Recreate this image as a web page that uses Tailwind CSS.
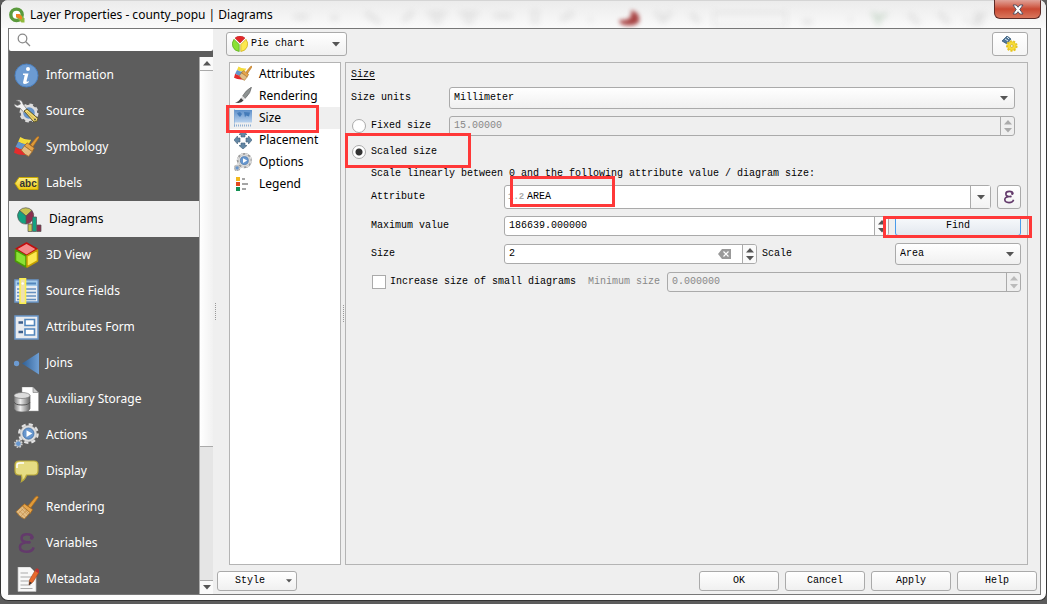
<!DOCTYPE html>
<html lang="en">
<head>
  <meta charset="UTF-8" />
  <meta name="viewport" content="width=device-width, initial-scale=1.0"/>
  <title>Layer Properties - county_popu | Diagrams</title>
  <script src="https://cdn.jsdelivr.net/npm/@tailwindcss/browser@4"></script>
</head>
<body class="h-screen overflow-hidden bg-[#5c5c5c] font-['Liberation_Mono',monospace] text-[10px] leading-3 text-black">

  <!-- Shared icons -->
  <svg class="absolute h-0 w-0" aria-hidden="true">
    <defs>
      <linearGradient id="silver"><stop offset="0" stop-color="#777"/><stop offset=".4" stop-color="#eee"/><stop offset="1" stop-color="#666"/></linearGradient>
      <linearGradient id="join"><stop offset="0" stop-color="#2f5f95"/><stop offset="1" stop-color="#6f9fd4"/></linearGradient>
      <linearGradient id="yellow" x2="0" y2="1"><stop offset="0" stop-color="#fdf08a"/><stop offset="1" stop-color="#ecc911"/></linearGradient>
      <linearGradient id="blue" x2="0" y2="1"><stop offset="0" stop-color="#5d8fca"/><stop offset="1" stop-color="#b9d2ee"/></linearGradient>
    </defs>
    <symbol id="brush" viewBox="0 0 24 24">
      <path d="M13 11 20.500 2 Q22.500 0 23 1.500 Q24 2 22.500 3.500L16 12.500z" fill="#e09a38" stroke="#a8671a" stroke-width=".7"/>
      <path d="M10 8.500 18 14 15.500 18 7.500 11z" fill="#e7a54a" stroke="#9c611b" stroke-width=".8"/>
      <path d="M8 10.500 15.500 17 10 23 Q5 21 2 16z" fill="#e2bd85" stroke="#a8742f" stroke-width=".9"/>
      <path d="M5 15l6 6M7 13l6 6M9 12l5 6M4 18l5-5M7 20l6-6" stroke="#c48f4b" stroke-width=".7"/>
    </symbol>
    <symbol id="symbology" viewBox="0 0 24 24">
      <path d="M6 2 Q10 5 16.500 4.500 L14 9 Q8 9 4 6.500z" fill="#f4dc3c"/>
      <path d="M4 6.500 Q8 9 14 9 L10 14 Q5 14 1.500 11.500z" fill="#6394cc"/>
      <path d="M1.500 11.500 Q5 14 10 14 L14 19 Q5 20 0 17z" fill="#e42c2c"/>
      <path d="M16 9 22 2 Q24 .5 24 2.500L18 11.500z" fill="#e09a38" stroke="#a8671a" stroke-width=".6"/>
      <path d="M12.500 7.500 19.500 12.500 17.500 16 10 10.500z" fill="#e7a54a" stroke="#9c611b" stroke-width=".7"/>
      <path d="M10 10.500 17.500 16 14 20.500 Q10 19 7 14.500z" fill="#e2bd85" stroke="#a8742f" stroke-width=".8"/>
    </symbol>
    <symbol id="gears" viewBox="0 0 26 26">
      <circle cx="15" cy="11" r="9.300" fill="none" stroke="#e2e2e2" stroke-width="3" stroke-dasharray="4.200 3.100"/>
      <circle cx="15" cy="11" r="8.500" fill="#dedede" stroke="#b5b5b5" stroke-width=".6"/>
      <circle cx="15" cy="11" r="5.800" fill="#6797cf" stroke="#3a699f" stroke-width=".8"/>
      <path d="M13 7.500v7l6-3.500z" fill="#fff"/>
      <circle cx="4.500" cy="21.500" r="3.700" fill="none" stroke="#d8d8d8" stroke-width="1.600" stroke-dasharray="1.700 1.200"/>
      <circle cx="4.500" cy="21.500" r="2.900" fill="#6797cf" stroke="#ccc" stroke-width=".9"/>
    </symbol>
    <symbol id="down" viewBox="0 0 8 5"><path d="M0 0h8L4 4.500z" fill="currentColor"/></symbol>
    <symbol id="up" viewBox="0 0 8 5"><path d="M0 4.500h8L4 0z" fill="currentColor"/></symbol>
    <symbol id="epsilon" viewBox="0 0 16 20">
      <path d="M13.500 5.500 Q13.500 2 8.500 2 Q3.500 2 3.500 5.600 Q3.500 9.200 10 9.300 Q2 9.500 2 13.700 Q2 18 8 18 Q13.500 18 14.500 14" fill="none" stroke="#633a6b" stroke-width="2.300"/>
      <circle cx="12.700" cy="5.300" r="1.700" fill="#633a6b"/><circle cx="10.500" cy="9.300" r="1.400" fill="#633a6b"/>
    </symbol>
  </svg>

  <div class="relative flex h-[calc(100vh-3px)] flex-col overflow-hidden rounded-lg border-x border-b border-[#333] bg-[#fdfdfd] pr-[5px] pb-[5px] pl-[7px]">

    <!-- Title bar -->
    <header class="relative -mr-[5px] -ml-[7px] flex h-7 shrink-0 items-center border-t border-[#d5d5d5] bg-linear-to-b from-[#ececec] to-[#fafafa] pl-2">
      <svg class="absolute top-0 left-0 h-full w-full" aria-hidden="true">
        <g class="blur-[3px]" fill="none" stroke="#999" stroke-opacity=".25" stroke-width="4">
          <path d="M293 16h14M330 17h7M365 12l14 10M402 20l10-9M427 13h18M431 20h10M459 13h18M463 20h10M493 15h18M530 12h8M530 20h8M560 19l12-7M588 19h3M655 11l7 9 8-9M690 13l8 8M802 21h9M848 19h3M908 13l10 10M938 12l10 10M973 14h9l-9 8h9M964 19h3"/>
          <path d="M713 12h72v13h-72z" stroke-opacity=".12"/>
          <path d="M871 12l6 5 9-4M877 17v7" stroke="#5c8f60" stroke-opacity=".35" stroke-width="3"/>
        </g>
        <path class="blur-[2px]" d="M630 9 Q640 12 638 21 Q632 27 620 23 Q616 18 621 19 Q632 20 630 9z" fill="#a84444"/>
      </svg>
      <svg class="relative h-4 w-4" viewBox="0 0 16 16">
        <circle cx="7.500" cy="7.800" r="5.700" fill="#fff" stroke="#5a9a3c" stroke-width="3.400"/>
        <path d="M7.500 7.500h4l4 4v4h-3l-5-5z" fill="#8fb93c"/>
        <path d="M7 7h3.500l2.500 2.500v3.300L7 10z" fill="#ef8322"/>
      </svg>
      <h1 class="relative ml-[5px] font-['Noto_Sans',sans-serif] text-[12px] leading-4">Layer Properties - county_popu | Diagrams</h1>
      <button aria-label="Close" class="absolute -top-px right-[5px] flex h-[19px] w-[47px] items-center justify-center rounded-b-md border border-t-0 border-[#5c2a26] bg-linear-to-b from-[#e0a298] via-[#c94832] via-50% to-[#d9765c]">
        <svg class="h-[11px] w-3" viewBox="0 0 12 11"><path d="M1 1h3.200L6 3.300 7.800 1H11L7.800 5.500 11 10H7.800L6 7.700 4.200 10H1L4.200 5.500z" fill="#fff" stroke="#4a4c60" stroke-width=".9"/></svg>
      </button>
    </header>

    <div class="flex min-h-0 flex-1 border border-[#777] bg-[#efefef]">

      <!-- Section list -->
      <aside class="flex w-[204px] shrink-0 flex-col bg-[#5d5d5d] font-['Noto_Sans',sans-serif] text-[12px] leading-5 text-white">
        <label class="flex h-[22px] shrink-0 items-center rounded-b-xs bg-white pl-2">
          <svg class="h-3.5 w-3.5" viewBox="0 0 14 14" fill="none" stroke="#8a8a8a" stroke-width="1.300"><circle cx="5.500" cy="5.500" r="4.300"/><path d="M8.800 8.800 13 13"/></svg>
          <input type="search" aria-label="Search" class="min-w-0 flex-1 px-1 text-black outline-none">
        </label>
        <div class="mt-1.5 flex min-h-0 flex-1">
          <nav class="min-w-0 flex-1 overflow-hidden">
            <a href="#" class="flex h-9 items-center gap-[7px] pl-[5px]">
              <svg class="h-[25px] w-[25px] shrink-0" viewBox="0 0 25 25"><circle cx="12.500" cy="12.500" r="11.500" fill="#6c9bd2" stroke="#4b7fbd"/><circle cx="14" cy="6" r="2" fill="#fff"/><path d="M9 10.500h5.500l-2 7.500q0 1.500 2.500 0l-.5 1.500q-5 3-5.500 0l1.700-7.500H9z" fill="#fff"/></svg>
              Information
            </a>
            <a href="#" class="flex h-9 items-center gap-[7px] pl-[5px]">
              <svg class="h-[25px] w-[25px] shrink-0" viewBox="0 0 25 25">
                <circle cx="15" cy="14" r="7" fill="#6493ca" stroke="#ddd" stroke-width="2.500"/>
                <circle cx="15" cy="14" r="8.500" fill="none" stroke="#ddd" stroke-width="2" stroke-dasharray="3.700 3"/>
                <path d="M2 1.500 Q8-.5 9 5 L13.500 11 10.500 14 6 9 Q1 9.500 0 5 L3.500 6.500 6.500 5 5.500 2.500z" fill="#f3f3f3" stroke="#777" stroke-width=".7"/>
                <path d="M10 12 13 10 24 19.500 Q24 23 20 23z" fill="#efd86f" stroke="#5d5528" stroke-width="1"/><path d="M13 13l7.500 7" stroke="#cdb04d"/><circle cx="21" cy="20.500" r=".9" fill="#444"/>
              </svg>
              Source
            </a>
            <a href="#" class="flex h-9 items-center gap-[7px] pl-[5px]">
              <svg class="h-[25px] w-[25px] shrink-0"><use href="#symbology"/></svg>
              Symbology
            </a>
            <a href="#" class="flex h-9 items-center gap-[7px] pl-[5px]">
              <svg class="h-[25px] w-[25px] shrink-0" viewBox="0 0 25 25"><path d="M1 12.500 5 6.500h19v12H5z" fill="url(#yellow)" stroke="#c7a800"/><text x="5.500" y="16" font-family="Liberation Sans" font-weight="bold" font-size="10" fill="#333">abc</text></svg>
              Labels
            </a>
            <a href="#" aria-current="page" class="flex h-9 items-center gap-[7px] bg-[#efefef] pl-2 text-black">
              <svg class="h-[25px] w-[25px] shrink-0" viewBox="0 0 25 25">
                <g stroke="#555" stroke-width=".7"><path d="M9 9 2.500 3.500A8.500 8.500 0 0 1 15 3.500z" fill="#c8c452"/><path d="M9 9 15 3.500A8.500 8.500 0 0 1 9 17z" fill="#8c2f4e"/><path d="M9 9v8A8.200 8.200 0 0 1 2.500 3.500z" fill="#14a181"/>
                <path d="M11 17h4v7.500h-4z" fill="#c8c452"/><path d="M15.500 10h4v14.500h-4z" fill="#14a181"/><path d="M20 18h4v6.500h-4z" fill="#8c2f4e"/></g>
              </svg>
              Diagrams
            </a>
            <a href="#" class="flex h-9 items-center gap-[7px] pl-[5px]">
              <svg class="h-[26px] w-[25px] shrink-0" viewBox="0 0 25 26" stroke-width="1.500" stroke-linejoin="round"><path d="M12.500 1 23 7 12.500 13.500 2 7z" fill="#f48b8b" stroke="#c00e0e"/><path d="M1.500 8 12 14v11L1.500 19z" fill="#8ae234" stroke="#4a9a06"/><path d="M23.500 8 13 14v11l10.500-6z" fill="#fce94f" stroke="#c4a000"/></svg>
              3D View
            </a>
            <a href="#" class="flex h-9 items-center gap-[7px] pl-[5px]">
              <svg class="h-[26px] w-[25px] shrink-0" viewBox="0 0 25 26"><path d="M1 2h23v22H1z" fill="#e9edf2" stroke="#6a97c9" stroke-width="1.500"/><path d="M2 3h21v5H2z" fill="#a5cdec"/><path d="M3 5.500h19" stroke="#5387bd" stroke-width="2"/><path d="M3 11h19M3 14.500h19M3 18h19M3 21.500h19" stroke="#6690c0" stroke-width="1.300"/><path d="M6 .8h5.500v24.500H6z" fill="#eee0b0" stroke="#fbef4d" stroke-width="1.600"/><circle cx="8.700" cy="5.500" r="1.200" fill="#fff"/></svg>
              Source Fields
            </a>
            <a href="#" class="flex h-9 items-center gap-[7px] pl-[5px]">
              <svg class="h-[25px] w-[25px] shrink-0" viewBox="0 0 25 25"><path d="M1 1h23v23H1z" fill="#e8ebef" stroke="#6a97c9" stroke-width="1.500"/><path d="M11 4.500h9.500v6H11zM11 14h9.500v6H11z" fill="#fff" stroke="#5387bd" stroke-width="1.600"/><path d="M4.500 7.500H9M4.500 17H9" stroke="#3c5f8c" stroke-width="2.400"/></svg>
              Attributes Form
            </a>
            <a href="#" class="flex h-9 items-center gap-[7px] pl-[5px]">
              <svg class="h-[25px] w-[25px] shrink-0" viewBox="0 0 25 25"><circle cx="2.500" cy="12.500" r="2.700" fill="#6c9bd2"/><path d="M8 12.500 25 1.500v22z" fill="url(#join)"/></svg>
              Joins
            </a>
            <a href="#" class="flex h-9 items-center gap-[7px] pl-[5px]">
              <svg class="h-[25px] w-[25px] shrink-0" viewBox="0 0 25 25"><path d="M8 0h11l5.500 5.500V24H8z" fill="#fff" stroke="#999" stroke-width=".5"/><path d="M19 0v5.500h5.500z" fill="#ccc" stroke="#777" stroke-width=".6"/><path d="M0 8.500v13Q1 25 8 25T16 21.500v-13z" fill="url(#silver)" stroke="#666" stroke-width=".7"/><ellipse cx="8" cy="8.500" rx="8" ry="3" fill="#ddd" stroke="#777" stroke-width=".7"/><path d="M0 15q1 3 8 3t8-3" fill="none" stroke="#555"/></svg>
              Auxiliary Storage
            </a>
            <a href="#" class="flex h-9 items-center gap-[7px] pl-[5px]">
              <svg class="h-[25px] w-[25px] shrink-0"><use href="#gears"/></svg>
              Actions
            </a>
            <a href="#" class="flex h-9 items-center gap-[7px] pl-[5px]">
              <svg class="h-[25px] w-[25px] shrink-0" viewBox="0 0 25 25"><path d="M5 2h15q4 0 4 4v6q0 4-4 4h-7.500q-1 4-5 6.500 1-3 0-6.500H5q-4 0-4-4V6q0-4 4-4z" fill="#e6dc83" stroke="#b9a93a" stroke-width="1.200"/><path d="M3 9V6q0-2 3-2h4" stroke="#fff" fill="none" stroke-width="1.500"/></svg>
              Display
            </a>
            <a href="#" class="flex h-9 items-center gap-[7px] pl-[5px]">
              <svg class="h-[25px] w-[25px] shrink-0"><use href="#brush"/></svg>
              Rendering
            </a>
            <a href="#" class="flex h-9 items-center gap-[7px] pl-[5px]">
              <svg class="h-[22px] w-[25px] shrink-0"><use href="#epsilon"/></svg>
              Variables
            </a>
            <a href="#" class="flex h-9 items-center gap-[7px] pl-[5px]">
              <svg class="h-[25px] w-[25px] shrink-0" viewBox="0 0 25 25"><path d="M4 0h12l6 6v18.500H4z" fill="#f8f8f8" stroke="#bbb" stroke-width=".7"/><path d="M6.500 6H14M6.500 10h11M6.500 14h9M6.500 18h10M6.500 21.500h12" stroke="#aaa"/><path d="M22 2 25.500 4.500 19 15l-4 3 .5-5z" fill="#e8692c" stroke="#a64314" stroke-width=".6"/><path d="M21 4l3.500 2.300L26 3.500 23 1z" fill="#b33"/><path d="M15.500 14.500 15 18l3-2z" fill="#333"/></svg>
              Metadata
            </a>
          </nav>
          <!-- Scroll bar -->
          <div class="flex w-3.5 shrink-0 flex-col border-l border-[#aaa] bg-[#e5e5e5]">
            <button aria-label="Scroll up" class="flex h-3.5 items-center justify-center border-b border-[#aaa] bg-[#fafafa] text-[#555]"><svg class="h-[5px] w-2"><use href="#up"/></svg></button>
            <div class="h-[376px] border-b border-[#aaa] bg-linear-to-r from-white to-[#f1f1f1]"></div>
            <button aria-label="Scroll down" class="mt-auto flex h-3.5 items-center justify-center border-t border-[#aaa] bg-[#fafafa] text-[#555]"><svg class="h-[5px] w-2"><use href="#down"/></svg></button>
          </div>
        </div>
      </aside>

      <div class="flex w-1 shrink-0 items-center justify-center"><div class="h-[17px] border-l border-dotted border-[#999]"></div></div>

      <!-- Diagram settings -->
      <main class="flex min-w-0 flex-1 flex-col pt-[3px] pr-[3px] pb-[3px]">
        <div class="flex h-6 items-center justify-between pr-[9px] pl-[9px]">
          <div class="relative flex h-6 w-[121px] items-center rounded-[3px] border border-[#aaa] bg-linear-to-b from-white to-[#f0f0f0]">
            <svg class="absolute left-[5px] h-4 w-4" viewBox="0 0 16 16"><path d="M8 7 3 2A8 8 0 0 1 13 2z" fill="#e22828" stroke="#b51616" stroke-width=".5"/><path d="M7.200 8.500v7A7.500 7.500 0 0 1 2 3.300z" fill="#8ae234" stroke="#58a618" stroke-width=".7"/><path d="M8.800 8.500v7A7.500 7.500 0 0 0 14 3.300z" fill="#fce94f" stroke="#c9a913" stroke-width=".7"/></svg>
            <select aria-label="Diagram type" class="h-full w-full appearance-none pl-6 outline-none"><option>Pie chart</option></select>
            <svg class="pointer-events-none absolute right-1.5 h-[5px] w-2 text-[#555]"><use href="#down"/></svg>
          </div>
          <button aria-label="Automated placement settings" class="flex h-6 w-9 items-center justify-center rounded-[3px] border border-[#aaa] bg-linear-to-b from-white to-[#f5f5f5]">
            <svg class="h-4 w-4" viewBox="0 0 16 16"><path d="M5 0 9 3 5 8 0 5z" fill="#4f7698" stroke="#2c506f" stroke-width=".7"/><path d="M3 3l3 2M5 1l2 2" stroke="#dce8f2"/><circle cx="9.800" cy="10" r="4.800" fill="none" stroke="#e9c722" stroke-width="2" stroke-dasharray="2 1.350"/><circle cx="9.800" cy="10" r="4.300" fill="#f8dc35" stroke="#dcb90f" stroke-width=".6"/><circle cx="9.800" cy="10" r="1.300" fill="#fff" stroke="#b99a10" stroke-width=".6"/></svg>
          </button>
        </div>

        <div class="mt-1.5 flex min-h-0 flex-1 pr-[9px] pl-3">
          <nav class="w-28 shrink-0 border border-[#b4b4b4] bg-white font-['Noto_Sans',sans-serif] text-[12px] leading-5">
            <a href="#" class="flex h-[22px] items-center gap-[7px] pl-1"><svg class="h-[18px] w-[18px]"><use href="#symbology"/></svg>Attributes</a>
            <a href="#" class="flex h-[22px] items-center gap-[7px] pl-1">
              <svg class="h-[18px] w-[18px]" viewBox="0 0 18 18"><path d="M17.500 0 Q17 6 11 11.500L8.500 9 Q12 3 17.500 0z" fill="#8d9292" stroke="#555" stroke-width=".5"/><path d="M8.500 9 11 11.500 9.500 13.500 7 11z" fill="#ddd"/><path d="M7 11 9.500 13.500 Q7 17 1 15.500 Q4.500 15 7 11z" fill="#444"/></svg>Rendering</a>
            <a href="#" aria-current="true" class="relative flex h-[22px] items-center gap-[7px] bg-[#efefef] pl-1">
              <svg class="h-[18px] w-[18px]" viewBox="0 0 18 18"><path d="M0 1h18v12.500H0z" fill="url(#blue)"/><path d="M3 4l3-1 2 2-2 3-2-2zM10 3l6 .5-1 4-3-1-1 2z" fill="#447bb9"/><path d="M0 16.500h18" stroke="#91b0d2" stroke-width="2" stroke-dasharray="1 1"/><path d="M0 0v18" stroke="#7ca4cf"/></svg>Size
              <span class="pointer-events-none absolute -top-0.5 -left-[4px] h-7 w-[93px] border-3 border-[#ff3838]"></span>
            </a>
            <a href="#" class="flex h-[22px] items-center gap-[7px] pl-1">
              <svg class="h-[18px] w-[18px]" viewBox="0 0 18 18" fill="#6387a5" stroke="#415f79" stroke-width=".6"><path d="M9 0l4 3.500h-2V6H7V3.500H5zM9 18l4-3.500h-2V12H7v2.500H5zM0 9l3.500-4v2H6v4H3.500v2zM18 9l-3.500-4v2H12v4h2.500v2z"/></svg>Placement</a>
            <a href="#" class="flex h-[22px] items-center gap-[7px] pl-1"><svg class="h-[18px] w-[18px]" viewBox="0 0 26 26"><circle cx="15" cy="11" r="11" fill="#999"/><circle cx="4.500" cy="21.500" r="4.500" fill="#999"/><use href="#gears"/></svg>Options</a>
            <a href="#" class="flex h-[22px] items-center gap-[7px] pl-1">
              <svg class="h-[18px] w-[18px]" viewBox="0 0 18 18"><path d="M2 2h4v4H2z" fill="#f2b81c"/><path d="M2 7h4v4H2z" fill="#e24a1c"/><path d="M2 12h4v4H2z" fill="#149154"/><path d="M8 4h3M8 9h6M8 14h4" stroke="#888" stroke-width="1.300"/></svg>Legend</a>
          </nav>

          <div class="flex w-1 shrink-0 items-center justify-center"><div class="h-[17px] border-l border-dotted border-[#999]"></div></div>

          <form class="min-w-0 flex-1 border border-[#b4b4b4] pr-1.5 pl-[5px]">
            <h2 class="flex h-6 items-center underline underline-offset-2">Size</h2>
            <div class="flex h-[22px] items-center pr-1.5">
              <label for="units" class="w-[98px] shrink-0">Size units</label>
              <div class="relative flex h-full flex-1 items-center rounded-[3px] border border-[#aaa] bg-linear-to-b from-white to-[#f0f0f0]">
                <select id="units" class="h-full w-full appearance-none pl-1 outline-none"><option>Millimeter</option></select>
                <svg class="pointer-events-none absolute right-1.5 h-[5px] w-2 text-[#555]"><use href="#down"/></svg>
              </div>
            </div>
            <div class="mt-[7px] flex h-5 items-center pr-1.5">
              <label class="flex w-[98px] shrink-0 items-center gap-[5px]">
                <input type="radio" name="mode" class="ml-px h-3.5 w-3.5 appearance-none rounded-full border border-[#aaa] bg-white">Fixed size
              </label>
              <div class="flex h-full flex-1 overflow-hidden rounded-[3px] border border-[#aaa] text-[#888]">
                <input type="text" aria-label="Fixed size value" value="15.00000" disabled class="min-w-0 flex-1 px-1">
                <div class="flex w-3.5 flex-col items-center justify-center gap-[3px] border-l border-[#aaa] text-[#aaa]">
                  <button type="button" disabled aria-label="Increase"><svg class="h-[5px] w-2"><use href="#up"/></svg></button>
                  <button type="button" disabled aria-label="Decrease"><svg class="h-[5px] w-2"><use href="#down"/></svg></button>
                </div>
              </div>
            </div>
            <div class="relative mt-1.5 flex h-5 items-center">
              <label class="flex items-center gap-[5px]">
                <input type="radio" name="mode" checked class="ml-px h-3.5 w-3.5 appearance-none rounded-full border border-[#aaa] bg-[radial-gradient(circle,#333_3px,white_4px)]">Scaled size
              </label>
              <span class="pointer-events-none absolute -top-[9px] -left-1.5 h-[35px] w-[126px] border-3 border-[#ff3838]"></span>
            </div>
            <div class="pl-5">
              <p class="flex h-[23px] items-center whitespace-nowrap">Scale linearly between 0 and the following attribute value / diagram size:</p>
              <div class="flex h-6 items-center">
                <label for="attribute" class="w-[133px] shrink-0">Attribute</label>
                <div class="relative flex h-full flex-1 items-center rounded-[3px] border border-[#aaa] bg-white">
                  <span class="absolute left-[3px] text-[9px] font-bold text-[#aaa]">1.2</span>
                  <select id="attribute" class="h-full w-full appearance-none pl-[22px] outline-none"><option>AREA</option></select>
                  <span class="pointer-events-none absolute right-0 flex h-full w-5 items-center justify-center border-l border-[#aaa] bg-linear-to-b from-white to-[#f2f2f2] text-[#555]"><svg class="h-[5px] w-2"><use href="#down"/></svg></span>
                  <span class="pointer-events-none absolute -top-2.5 left-[5px] h-[31px] w-[105px] border-3 border-[#ff3838]"></span>
                </div>
                <button type="button" aria-label="Expression" class="ml-1.5 flex h-full w-6 items-center justify-center rounded-[3px] border border-[#aaa] bg-linear-to-b from-white to-[#f2f2f2]"><svg class="h-3.5 w-3"><use href="#epsilon"/></svg></button>
              </div>
              <div class="relative mt-[7px] flex h-5 items-center">
                <label for="maximum" class="w-[133px] shrink-0">Maximum value</label>
                <div class="flex h-full flex-1 overflow-hidden rounded-[3px] border border-[#aaa] bg-white">
                  <input type="text" id="maximum" value="186639.000000" class="min-w-0 flex-1 px-1 outline-none">
                  <div class="flex w-3.5 flex-col items-center justify-center gap-[3px] border-l border-[#aaa] bg-[#fafafa] text-[#555]">
                    <button type="button" aria-label="Increase"><svg class="h-[5px] w-2"><use href="#up"/></svg></button>
                    <button type="button" aria-label="Decrease"><svg class="h-[5px] w-2"><use href="#down"/></svg></button>
                  </div>
                </div>
                <button type="button" class="ml-1.5 h-full w-[126px] rounded-[3px] border border-[#4a9bea] bg-linear-to-b from-[#f8fafc] to-[#e3e8ef]">Find</button>
                <span class="pointer-events-none absolute top-0 -right-[11px] h-[22px] w-[149px] border-3 border-[#ff3838]"></span>
              </div>
              <div class="mt-[7px] flex h-[22px] items-center">
                <label for="size" class="w-[133px] shrink-0">Size</label>
                <div class="flex h-5 w-[253px] items-center overflow-hidden rounded-[3px] border border-[#aaa] bg-white">
                  <input type="text" id="size" value="2" class="min-w-0 flex-1 px-1 outline-none">
                  <button type="button" aria-label="Clear" class="mr-[11px]"><svg class="h-2.5 w-[13px]" viewBox="0 0 13 10"><path d="M4 0h9v10H4L0 5z" fill="#999"/><path d="M5.500 2.500l5 5M10.500 2.500l-5 5" stroke="#fff" stroke-width="1.200"/></svg></button>
                  <div class="flex h-full w-3.5 shrink-0 flex-col items-center justify-center gap-[3px] border-l border-[#aaa] bg-[#fafafa] text-[#555]">
                    <button type="button" aria-label="Increase"><svg class="h-[5px] w-2"><use href="#up"/></svg></button>
                    <button type="button" aria-label="Decrease"><svg class="h-[5px] w-2"><use href="#down"/></svg></button>
                  </div>
                </div>
                <label for="scale" class="ml-[5px]">Scale</label>
                <div class="relative ml-auto flex h-full w-[126px] items-center rounded-[3px] border border-[#aaa] bg-linear-to-b from-white to-[#f0f0f0]">
                  <select id="scale" class="h-full w-full appearance-none pl-1 outline-none"><option>Area</option></select>
                  <svg class="pointer-events-none absolute right-1.5 h-[5px] w-2 text-[#555]"><use href="#down"/></svg>
                </div>
              </div>
              <div class="mt-[7px] flex h-5 items-center">
                <label class="flex items-center gap-[4px]">
                  <input type="checkbox" class="ml-px h-3.5 w-3.5 appearance-none border border-[#aaa] bg-white">Increase size of small diagrams
                </label>
                <label for="minimum" class="ml-3 text-[#888]">Minimum size</label>
                <div class="ml-[7px] flex h-full flex-1 overflow-hidden rounded-[3px] border border-[#aaa] text-[#888]">
                  <input type="text" id="minimum" value="0.000000" disabled class="min-w-0 flex-1 px-1">
                  <div class="flex w-3.5 flex-col items-center justify-center gap-[3px] border-l border-[#aaa] text-[#bbb]">
                    <button type="button" disabled aria-label="Increase"><svg class="h-[5px] w-2"><use href="#up"/></svg></button>
                    <button type="button" disabled aria-label="Decrease"><svg class="h-[5px] w-2"><use href="#down"/></svg></button>
                  </div>
                </div>
              </div>
            </div>
          </form>
        </div>

        <!-- Dialog buttons -->
        <footer class="mt-1.5 flex h-5 shrink-0 gap-1.5">
          <button class="relative mr-auto flex w-20 items-center rounded-[3px] border border-[#aaa] bg-linear-to-b from-white to-[#f0f0f0] pl-[17px]">Style<svg class="absolute right-1 h-1 w-1.5 text-[#555]"><use href="#down"/></svg></button>
          <button class="w-20 rounded-[3px] border border-[#aaa] bg-linear-to-b from-white to-[#f0f0f0]">OK</button>
          <button class="w-20 rounded-[3px] border border-[#aaa] bg-linear-to-b from-white to-[#f0f0f0]">Cancel</button>
          <button class="w-20 rounded-[3px] border border-[#aaa] bg-linear-to-b from-white to-[#f0f0f0]">Apply</button>
          <button class="w-20 rounded-[3px] border border-[#aaa] bg-linear-to-b from-white to-[#f0f0f0]">Help</button>
        </footer>
      </main>
    </div>
  </div>
</body>
</html>
